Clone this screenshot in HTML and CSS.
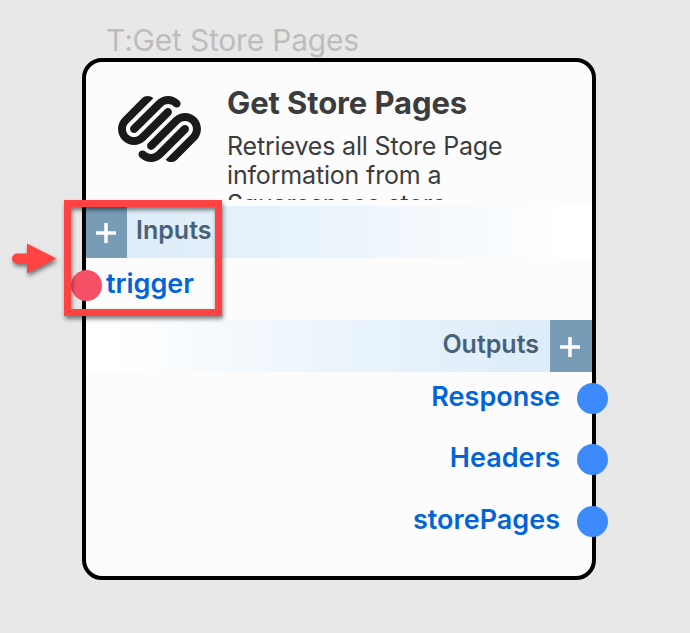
FILE: index.html
```html
<!DOCTYPE html>
<html lang="en">
<head>
<meta charset="utf-8">
<title>Get Store Pages</title>
<link rel="stylesheet" href="styles.css">
</head>
<body>
<main class="canvas">
  <div class="caption">T:Get Store Pages</div>
  <section class="node">
    <header class="head">
      <svg class="logo" viewBox="0 2.45 24 19.1"><path d="M22.655 8.719c-1.802-1.801-4.726-1.801-6.564 0l-7.351 7.35c-.45.45-.45 1.2 0 1.65.45.449 1.2.449 1.65 0l7.351-7.351c.899-.899 2.362-.899 3.264 0 .9.9.9 2.364 0 3.264l-7.239 7.239c.9.899 2.362.899 3.263 0l5.589-5.589c1.836-1.838 1.836-4.763.037-6.563zm-2.475 2.437c-.451-.45-1.201-.45-1.65 0l-7.354 7.389c-.9.899-2.361.899-3.262 0-.45-.45-1.2-.45-1.65 0s-.45 1.2 0 1.649c1.801 1.801 4.726 1.801 6.564 0l7.351-7.35c.449-.487.449-1.239.001-1.688zm-2.439-7.35c-1.801-1.801-4.726-1.801-6.564 0l-7.351 7.351c-.45.449-.45 1.199 0 1.649s1.2.45 1.65 0l7.395-7.351c.9-.899 2.371-.899 3.27 0 .451.45 1.201.45 1.65 0 .421-.487.421-1.199-.05-1.649zm-2.475 2.475c-.45-.449-1.2-.449-1.65 0l-7.388 7.352c-.9.899-2.363.899-3.265 0-.9-.9-.9-2.364 0-3.264l7.239-7.239c-.9-.9-2.362-.9-3.263 0L1.35 8.719c-1.8 1.8-1.8 4.763 0 6.563 1.801 1.801 4.725 1.801 6.564 0l7.35-7.351c.451-.488.451-1.238.002-1.65z"/></svg>
      <div class="about">
        <h1>Get Store Pages</h1>
        <p>Retrieves all Store Page information from a Squarespace store</p>
      </div>
    </header>
    <div class="bar inputs">
      <span class="add"><svg viewBox="0 0 20 20"><path d="M10 0v20M0 10h20"/></svg></span>
      <span class="bar-label">Inputs</span>
    </div>
    <div class="port port-in"><i class="dot"></i><span>trigger</span></div>
    <div class="bar outputs">
      <span class="bar-label">Outputs</span>
      <span class="add"><svg viewBox="0 0 20 20"><path d="M10 0v20M0 10h20"/></svg></span>
    </div>
    <div class="ports-out">
      <div class="port"><span>Response</span><i class="dot"></i></div>
      <div class="port"><span>Headers</span><i class="dot"></i></div>
      <div class="port"><span>storePages</span><i class="dot"></i></div>
    </div>
  </section>
  <div class="highlight"></div>
  <svg class="arrow" viewBox="0 0 46 32"><path d="M5 10.500H15V.5L44.500 15.500 15 30.500V20.500H5a5 5 0 0 1 0-10z"/></svg>
</main>
</body>
</html>
```
FILE: styles.css
```css
* { box-sizing: border-box; }
body {
  margin: 0;
  background: #e8e8e8;
  font-family: Inter, "Liberation Sans", sans-serif;
}
.canvas {
  position: relative;
  width: 690px;
  height: 633px;
  padding: 22px 0 0 82px;
  overflow: hidden;
}
.caption {
  height: 36px;
  padding-left: 24px;
  font-size: 30px;
  letter-spacing: -.2px;
  line-height: 36px;
  color: #bdbdbd;
}
.node {
  width: 514px;
  height: 522px;
  border: 4px solid #000;
  border-radius: 20px;
  background: #fcfcfc;
}
.head {
  display: flex;
  height: 138px;
  padding: 22px 0 0 31.500px;
  overflow: hidden;
}
.logo {
  flex: none;
  width: 83px;
  height: 66px;
  margin-top: 12px;
  fill: #1b1a18;
}
.about {
  width: 300px;
  margin-left: 26.500px;
  color: #3c3c3c;
}
h1 {
  margin: 0;
  font-size: 31px;
  font-weight: 700;
  letter-spacing: -.1px;
  line-height: 38px;
}
p {
  margin: 10px 0 0;
  font-size: 25px;
  letter-spacing: -.17px;
  line-height: 29px;
}
.bar {
  display: flex;
  height: 52px;
  font-size: 25px;
  font-weight: 600;
  line-height: 49px;
  color: #48617a;
}
.inputs {
  margin-top: 6px;
  background: linear-gradient(90deg, #dbebf8, #e5f1fb 35%, #f4f9fd 70%, #fff 95%);
}
.inputs .bar-label { margin-left: 9px; }
.outputs {
  justify-content: flex-end;
  line-height: 48px;
  background: linear-gradient(270deg, #dbebf8, #e5f1fb 35%, #f4f9fd 70%, #fff 95%);
}
.outputs .bar-label { margin-right: 11px; }
.add {
  display: flex;
  align-items: center;
  justify-content: center;
  width: 41px;
  padding: 2px 2px 0 0;
  background: #789bb6;
}
.outputs .add { width: 42px; padding-right: 3px; }
.add svg {
  width: 20px;
  height: 20px;
  fill: none;
  stroke: #fff;
  stroke-width: 3.5;
}
.port {
  display: flex;
  align-items: center;
  height: 61.5px;
  font-size: 27px;
  font-weight: 600;
  line-height: 32px;
  color: #0364d8;
}
.port-in { margin-left: -15px; padding-bottom: 6px; }
.port-in span { margin: -4px 0 0 4px; }
.dot {
  flex: none;
  width: 31px;
  height: 31px;
  border-radius: 50%;
  background: #3d8bfb;
}
.port-in .dot { background: #f55065; }
.ports-out { margin: -4px -16px 0 0; }
.ports-out .port { justify-content: flex-end; }
.ports-out span { margin: -3px 17px 0 0; }
.highlight {
  position: absolute;
  left: 64px;
  top: 200px;
  width: 158px;
  height: 116px;
  border: 7px solid #ff4343;
  filter: drop-shadow(1px 3px 2px rgba(0, 0, 0, .5));
}
.arrow {
  position: absolute;
  left: 12px;
  top: 243px;
  width: 46px;
  height: 32px;
  overflow: visible;
  fill: #ff4343;
  filter: drop-shadow(1px 3px 2px rgba(0, 0, 0, .5));
}
```
